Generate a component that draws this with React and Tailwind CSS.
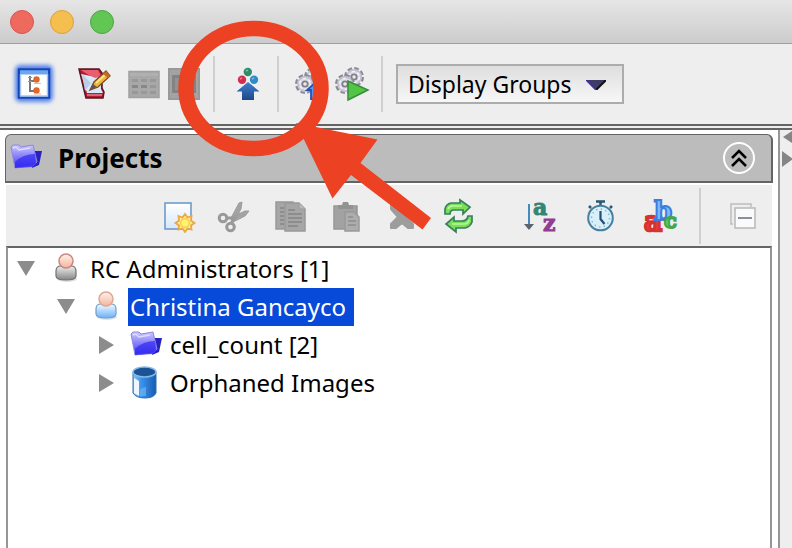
import React from "react";

function ToolButton({ label, width = "w-10", children }) {
  return (
    <button type="button" aria-label={label} className={`flex h-11 shrink-0 items-center justify-center ${width}`}>
      {children}
    </button>
  );
}

function Icon({ children, size = "size-8", box = "0 0 32 32" }) {
  return (
    <svg viewBox={box} className={`shrink-0 overflow-visible ${size}`} fill="none" aria-hidden="true">
      {children}
    </svg>
  );
}

function Separator() {
  return <div className="mr-[13px] ml-[9px] h-14 w-0.5 shrink-0 bg-[#cfcfcf]" />;
}

function TreeViewIcon() {
  return (
    <Icon>
      <rect x="-3" y="-3" width="38" height="37" rx="5" fill="#5583e8" filter="url(#glow)" />
      <rect x="1" y="1.500" width="30" height="28" fill="#fff" stroke="#1346b8" strokeWidth="2.500" />
      <path d="M2 2.500h28v4H2z" fill="#6aa6f2" />
      <path d="M2.500 6v22h27V6" stroke="#a9c6ef" strokeWidth="1.500" />
      <path d="M12 8v15h5M12 13h5" stroke="#777" strokeWidth="2" />
      <path d="M10 9.500h4M10 13.500h4" stroke="#999" />
      <circle cx="18.500" cy="11.500" r="3.200" fill="#e0662c" />
      <circle cx="18.500" cy="22.500" r="3.200" fill="#e0662c" />
      <path d="M16 15.500h7M16 26h7" stroke="#f0b59b" />
    </Icon>
  );
}

function NotepadIcon() {
  return (
    <Icon>
      <path d="M1 1h20l3 4v15l2 4-1 6H8L6 22z" fill="#b51d33" stroke="#5a1620" strokeWidth="1.500" />
      <path d="M3 6l20 4v11l2 4H9z" fill="#d9e7f7" />
      <path d="M4 6l9 9-6 8z" fill="#b9cfe8" />
      <path d="M3 2h17l3 6-6 2-8-4z" fill="#ea5c70" />
      <path d="M9 27h15" stroke="#e9a0a8" strokeWidth="1.200" />
      <path d="M12 22l4-8L28 3l4 5-12 11z" fill="#f2b632" stroke="#7a4a1d" strokeWidth="1.300" />
      <path d="M18 15L28 6" stroke="#ffe58a" strokeWidth="1.800" />
      <path d="M28 3l4 5-2 2-5-4z" fill="#c46b24" />
      <path d="M12 22l3-6 4 3z" fill="#5c5565" />
    </Icon>
  );
}

function GridIcon() {
  return (
    <Icon>
      <rect x="1" y="3.500" width="30" height="26" fill="#a8a8a8" stroke="#a0a0a0" strokeWidth="1.500" />
      <path d="M2 5h28v3H2z" fill="#b0b0b0" />
      <path d="M4 11h6v3H4zm9 0h6v3h-6zm9 0h6v3h-6zM4 17h6v3H4zm9 0h6v3h-6zm9 0h6v3h-6zM4 23h6v3H4zm9 0h6v3h-6zm9 0h6v3h-6z" fill="#989898" />
      <path d="M4 17h6v3H4zm9 0h6v3h-6z" fill="#888" />
    </Icon>
  );
}

function FullScreenIcon() {
  return (
    <Icon>
      <path d="M0 0h32v32H0z" fill="#a3a3a3" />
      <path d="M0 0h32v2H0zM0 30h32v2H0zM0 0h2v32H0zm30 0h2v32h-2z" fill="#999" />
      <path d="M4 7h24v18H4z" fill="#838383" />
      <path d="M7 10h17v12H7z" fill="#929292" />
    </Icon>
  );
}

function ImportIcon() {
  return (
    <Icon>
      <circle cx="15.800" cy="4" r="4.200" fill="#2e8d6b" />
      <circle cx="10" cy="11.700" r="4.200" fill="#d72b4b" />
      <circle cx="22" cy="11.700" r="4.200" fill="#2e8bc9" />
      <path d="M14 3l2-1M8 11l2-1M20 11l2-1" stroke="#ffffff66" strokeWidth="1.500" />
      <path d="M16 14L4.500 23.500H10V32h12v-8.500h5.500z" fill="url(#up)" />
    </Icon>
  );
}

function Gear({ cx, cy }) {
  return (
    <g>
      <circle cx={cx} cy={cy} r="8" stroke="#8b8b94" strokeWidth="4" strokeDasharray="4.200 2.083" />
      <circle cx={cx} cy={cy} r="7" fill="#dcdce8" stroke="#c2c2d2" strokeWidth="2" />
      <circle cx={cx} cy={cy} r="5.500" stroke="#f3f3fa" strokeWidth="1.500" strokeDasharray="3 2.760" />
      <circle cx={cx} cy={cy} r="3.600" fill="#818188" />
      <circle cx={cx} cy={cy} r="1.800" fill="#efece6" />
    </g>
  );
}

function Gears({ children }) {
  return (
    <Icon>
      <Gear cx="18" cy="9" />
      <Gear cx="9" cy="16" />
      {children}
    </Icon>
  );
}

function NewIcon() {
  return (
    <Icon>
      <rect x="3" y="3" width="26" height="26" fill="url(#page)" stroke="#6f9cc9" strokeWidth="1.600" />
      <path d="M23 14l2.500 3.500 4-1.500-.5 4.500 3.500 2.500-3.500 2.500.5 4-4-1-2.500 3.500-2.500-3.500-4 1 .5-4-3.500-2.500 3.500-2.500-.5-4.500 4 1.500z" fill="#ffe98a" stroke="#eca844" strokeWidth="1.800" />
      <circle cx="23" cy="23" r="4.300" fill="#fff36e" stroke="#f4bd45" />
    </Icon>
  );
}

function CutIcon() {
  return (
    <Icon>
      <path d="M24 2l-3 1-8 15 4 2 6-11zM31 11l-4 0-15 7 3 4 12-6z" fill="#a3a3a3" stroke="#9c9c9c" />
      <circle cx="5" cy="18" r="3.800" stroke="#999" strokeWidth="3" />
      <circle cx="12.500" cy="27" r="3.800" stroke="#999" strokeWidth="3" />
      <path d="M8 18h8l-3 6" stroke="#999" strokeWidth="3" />
    </Icon>
  );
}

function CopyIcon() {
  return (
    <Icon>
      <path d="M2 2h17v27H2z" fill="#a6a6a6" stroke="#999" strokeWidth="1.500" />
      <path d="M6 8h4M6 12h4M6 16h4M6 20h4M6 24h4" stroke="#858585" strokeWidth="1.700" />
      <path d="M11 3h14l6 6v22H11z" fill="#a6a6a6" stroke="#999" strokeWidth="1.500" />
      <path d="M25 3v6h6" fill="#bbb" stroke="#999" />
      <path d="M14 10h7M14 14h14M14 18h14M14 22h14M14 26h10" stroke="#858585" strokeWidth="1.700" />
    </Icon>
  );
}

function PasteIcon() {
  return (
    <Icon>
      <path d="M4 6h23v23H4z" fill="#a2a2a2" stroke="#979797" strokeWidth="1.500" />
      <path d="M8 9V5h4l1-3h5l1 3h4v4z" fill="#929292" />
      <path d="M15 12h9l5 5v14H15z" fill="#adadad" stroke="#999" strokeWidth="1.500" />
      <path d="M18 17h5M18 21h8M18 25h8" stroke="#8d8d8d" strokeWidth="1.700" />
    </Icon>
  );
}

function DeleteIcon() {
  return (
    <Icon>
      <path d="M5 5h5l6 7 6-7h5v4l-7 8 7 7v4h-5l-6-5-6 5H5v-4l7-7-7-8z" fill="#9d9d9d" stroke="#9d9d9d" strokeWidth="2" strokeLinejoin="round" />
    </Icon>
  );
}

function RefreshIcon() {
  return (
    <Icon>
      <path d="M3 14V9q1-5 6-6h9V0l10 7-7 7v-4h-9q-4 0-4 4z" fill="#79df57" stroke="#36805a" strokeWidth="1.700" />
      <path d="M30 16v6q-2 5-7 6h-9v4L4 24l8-7v4h8q5 0 6-5z" fill="#79df57" stroke="#36805a" strokeWidth="1.700" />
      <path d="M6 9q2-4 6-3h8M10 24h12q4 0 5-4" stroke="#b9f6a0" strokeWidth="1.700" />
    </Icon>
  );
}

function SortIcon() {
  return (
    <Icon>
      <path d="M5 4v22" stroke="#438bbc" strokeWidth="2" />
      <path d="M0 24h10l-5 6z" fill="#596471" />
      <text x="9" y="15" className="font-['DejaVu_Serif',serif] text-[22px] font-bold" fill="#338576" stroke="#338576">a</text>
      <text x="19" y="31" className="font-['DejaVu_Serif',serif] text-[22px] font-bold" fill="#913d91" stroke="#913d91">z</text>
    </Icon>
  );
}

function ClockIcon() {
  return (
    <Icon>
      <path d="M12 1.500h9M16.500 1v5M5 6l2 2M28 6l-2 2" stroke="#285873" strokeWidth="2.500" />
      <circle cx="16.500" cy="18" r="12.300" fill="#d9f0fa" stroke="#477f9f" strokeWidth="2" />
      <circle cx="16.500" cy="18" r="9" stroke="#83b9d4" strokeWidth="1.500" strokeDasharray="1.500 3.200" />
      <path d="M16.500 11v8l4 5" stroke="#244e79" strokeWidth="2.200" />
    </Icon>
  );
}

function TagsIcon() {
  return (
    <Icon>
      <text x="0" y="31" className="font-['DejaVu_Serif',serif] text-[28px] font-bold" fill="#e93b38" stroke="#d63230" strokeWidth="2.500">a</text>
      <text x="10" y="20" className="font-['DejaVu_Serif',serif] text-[26px] font-bold" fill="#7cbcff" stroke="#3c7de0" strokeWidth="2">b</text>
      <text x="20" y="28" className="font-['DejaVu_Serif',serif] text-[21px] font-bold" fill="#62ca5b" stroke="#45a549" strokeWidth="2">c</text>
    </Icon>
  );
}

function CollapseIcon() {
  return (
    <Icon>
      <path d="M7 24H5V4h20v3" stroke="#bdbdbd" strokeWidth="1.500" />
      <path d="M9 8h20v20H9z" fill="#f9fafb" stroke="#b8b8b8" strokeWidth="1.500" />
      <path d="M12 18h14" stroke="#7d838c" strokeWidth="1.800" />
    </Icon>
  );
}

function FolderIcon() {
  return (
    <Icon>
      <path d="M25 9l7 0-3 14-7 3z" fill="#2722bd" />
      <path d="M1 5l2-2h6l2 2 12-2 4 17-4 4-18 2z" fill="url(#folder)" stroke="#8c86e3" />
      <path d="M5 20q8-8 20-8l1 11-3 2-18 1z" fill="#3028f3" opacity=".7" />
      <path d="M3 6l3-1 3 3 11-2" stroke="#dedcff" strokeWidth="1.500" />
    </Icon>
  );
}

function PersonIcon({ grey }) {
  return (
    <Icon>
      <ellipse cx="17" cy="26" rx="10" ry="3" fill="#000" opacity=".12" />
      <path d="M6 23V18q0-5 5-5h10q5 0 5 5v5q0 4-10 4T6 23z" fill={grey ? "url(#grey)" : "url(#blue)"} stroke={grey ? "#707070" : "#6f9ecb"} strokeWidth="1.200" />
      <circle cx="16" cy="8" r="7" fill="url(#face)" stroke={grey ? "#c98780" : "#dba78f"} strokeWidth="1.500" />
    </Icon>
  );
}

function CylinderIcon() {
  return (
    <Icon>
      <path d="M3 5v21q3 5 12 5t11-5V5z" fill="url(#drum)" stroke="#2f6fb4" />
      <path d="M4 11l5 3v15l-5-3z" fill="#eef7ff" />
      <ellipse cx="14.500" cy="5" rx="11.500" ry="5" fill="#1b5396" stroke="#84b8e8" strokeWidth="1.500" />
      <path d="M10 23q3-3 6-3v9l-6 0z" fill="#77bcf5" opacity=".6" />
    </Icon>
  );
}

function Gradients() {
  const ramps = [
    ["up", "#3f7fd0", "#1d4788"],
    ["page", "#ffffff", "#d6e7fa"],
    ["folder", "#cbc9ff", "#3e35ef"],
    ["grey", "#eeeeee", "#858585"],
    ["blue", "#f4faff", "#68b2fb"],
    ["face", "#fff1eb", "#f5b49e"],
  ];
  return (
    <svg className="absolute size-0" aria-hidden="true">
      <defs>
        {ramps.map(([id, from, to]) => (
          <linearGradient key={id} id={id} x1="0" y1="0" x2="0" y2="1">
            <stop stopColor={from} />
            <stop offset="1" stopColor={to} />
          </linearGradient>
        ))}
        <linearGradient id="drum">
          <stop stopColor="#8fc2ee" />
          <stop offset=".35" stopColor="#3b93ee" />
          <stop offset="1" stopColor="#195caf" />
        </linearGradient>
        <filter id="glow" x="-30%" y="-30%" width="160%" height="160%">
          <feGaussianBlur stdDeviation="2" />
        </filter>
      </defs>
    </svg>
  );
}

function TreeRow({ indent, open, icon, label, selected }) {
  return (
    <li role="treeitem" aria-expanded={open} aria-selected={!!selected} className={`flex h-[38px] items-center ${indent}`}>
      <button type="button" aria-label={`Toggle ${label}`} className="flex h-full w-9 shrink-0 items-center justify-center">
        <svg viewBox="0 0 18 18" className="size-[18px]" aria-hidden="true">
          <path d={open ? "M0 1h18L9 16z" : "M2 0l15 9-15 9z"} fill="#8c8c8c" />
        </svg>
      </button>
      <span className="flex w-11 shrink-0 justify-center">{icon}</span>
      <span className={`h-full px-0.5 leading-[38px] whitespace-nowrap ${selected ? "bg-[#0749d9] pr-2 text-white" : ""}`}>{label}</span>
    </li>
  );
}

export default function App() {
  return (
    <div className="relative flex min-h-screen flex-col overflow-hidden bg-[#eeeeee] font-['Noto_Sans','Open_Sans',sans-serif] text-2xl text-black">
      <Gradients />
      <header className="flex h-11 items-center gap-4 border-b border-[#9f9f9f] bg-linear-to-b from-[#e6e6e6] to-[#cccccc] pl-2.5">
        <button type="button" aria-label="Close" className="size-6 rounded-full border border-[#dc554d] bg-[#ee6a5f]" />
        <button type="button" aria-label="Minimize" className="size-6 rounded-full border border-[#dba03b] bg-[#f5bf4f]" />
        <button type="button" aria-label="Zoom" className="size-6 rounded-full border border-[#4ba740] bg-[#62c655]" />
      </header>

      <div className="flex h-20 items-center pl-3.5">
        <ToolButton label="Tree view"><TreeViewIcon /></ToolButton>
        <div className="ml-5"><ToolButton label="Edit"><NotepadIcon /></ToolButton></div>
        <div className="ml-2.5 flex">
          <ToolButton label="Grid"><GridIcon /></ToolButton>
          <ToolButton label="Full screen"><FullScreenIcon /></ToolButton>
        </div>
        <Separator />
        <ToolButton label="Import"><ImportIcon /></ToolButton>
        <Separator />
        <ToolButton label="Upload script">
          <Gears><path d="M20 14l-9 8h4v9h11v-9h4z" fill="#5c99ee" stroke="#2750b5" strokeWidth="1.800" /></Gears>
        </ToolButton>
        <ToolButton label="Run script">
          <Gears><path d="M12 13l20 9-20 10z" fill="#51c544" stroke="#3a8b3d" strokeWidth="1.500" /></Gears>
        </ToolButton>
        <Separator />
        <div className="relative">
          <select aria-label="Display groups" className="block h-10 w-[228px] appearance-none border-2 border-[#acacac] bg-linear-to-b from-[#dedede] to-[#f7f7f7] pl-2.5 text-[23px] leading-9">
            <option>Display Groups</option>
          </select>
          <svg viewBox="0 0 20 10" className="pointer-events-none absolute top-4 right-[18px] h-2.5 w-5" aria-hidden="true">
            <path d="M0 0h20L10 10z" fill="#3f3b68" />
            <path d="M20 0L10 10" stroke="#111" strokeWidth="2" />
            <path d="M0 0l10 10" stroke="#3c30a5" strokeWidth="1.500" />
          </svg>
        </div>
      </div>

      <div className="h-1.5 shrink-0 border-y-2 border-[#646464]" />

      <div className="flex flex-1">
        <main className="flex flex-1 flex-col border-r-2 border-[#969696] bg-white pt-1 pr-[5px] pl-[5px]">
          <div className="flex h-[49px] items-center rounded-t-md border-t border-r-2 border-b-2 border-l border-[#646464] bg-[#bcbcbc] pr-4 pl-1">
            <FolderIcon />
            <h1 className="ml-4 flex-1 text-[26px] leading-8 font-bold">Projects</h1>
            <button type="button" aria-label="Collapse panel" className="flex size-8 items-center justify-center rounded-full border-2 border-white">
              <svg viewBox="0 0 32 32" className="size-8 shrink-0" fill="none" stroke="#000" strokeWidth="2.500" aria-hidden="true">
                <path d="M9 16l7-7 7 7M9 24l7-7 7 7" />
              </svg>
            </button>
          </div>
          <div className="mx-px mt-0.5 flex h-[61px] items-center justify-end bg-[#eeeeee] pr-2.5">
            <ToolButton label="New" width="w-14"><NewIcon /></ToolButton>
            <ToolButton label="Cut" width="w-14"><CutIcon /></ToolButton>
            <ToolButton label="Copy" width="w-14"><CopyIcon /></ToolButton>
            <ToolButton label="Paste" width="w-14"><PasteIcon /></ToolButton>
            <ToolButton label="Delete" width="w-14"><DeleteIcon /></ToolButton>
            <ToolButton label="Refresh" width="w-14"><RefreshIcon /></ToolButton>
            <div className="ml-6 flex">
              <ToolButton label="Sort by name" width="w-15"><SortIcon /></ToolButton>
              <ToolButton label="Sort by date" width="w-15"><ClockIcon /></ToolButton>
              <ToolButton label="Filter by text" width="w-15"><TagsIcon /></ToolButton>
            </div>
            <Separator />
            <div className="ml-2"><ToolButton label="Collapse all"><CollapseIcon /></ToolButton></div>
          </div>
          <ul role="tree" className="mx-px flex-1 border-x-2 border-t-2 border-x-[#969696] border-t-[#646464] pt-0.5">
            <TreeRow indent="pl-0" open icon={<PersonIcon grey />} label="RC Administrators [1]" />
            <TreeRow indent="pl-10" open icon={<PersonIcon />} label="Christina Gancayco" selected />
            <TreeRow indent="pl-20" open={false} icon={<FolderIcon />} label="cell_count [2]" />
            <TreeRow indent="pl-20" open={false} icon={<CylinderIcon />} label="Orphaned Images" />
          </ul>
        </main>
        <aside className="w-3 shrink-0 overflow-hidden">
          <svg viewBox="0 0 12 40" className="h-10 w-3" fill="#858585" aria-hidden="true">
            <path d="M3 7l12-8v16zM2 21l11 8-11 8z" />
          </svg>
        </aside>
      </div>

      <svg viewBox="0 0 792 548" className="pointer-events-none absolute top-0 left-0 h-[548px] w-[792px]" fill="none" aria-hidden="true">
        <ellipse cx="253.500" cy="88.500" rx="67.500" ry="60" stroke="#ed4124" strokeWidth="15.500" />
        <path d="M296 123L377.500 139.500 360.500 163 431 218 422.500 229.500 351 175 332.500 198.500z" fill="#ed4124" />
      </svg>
    </div>
  );
}
